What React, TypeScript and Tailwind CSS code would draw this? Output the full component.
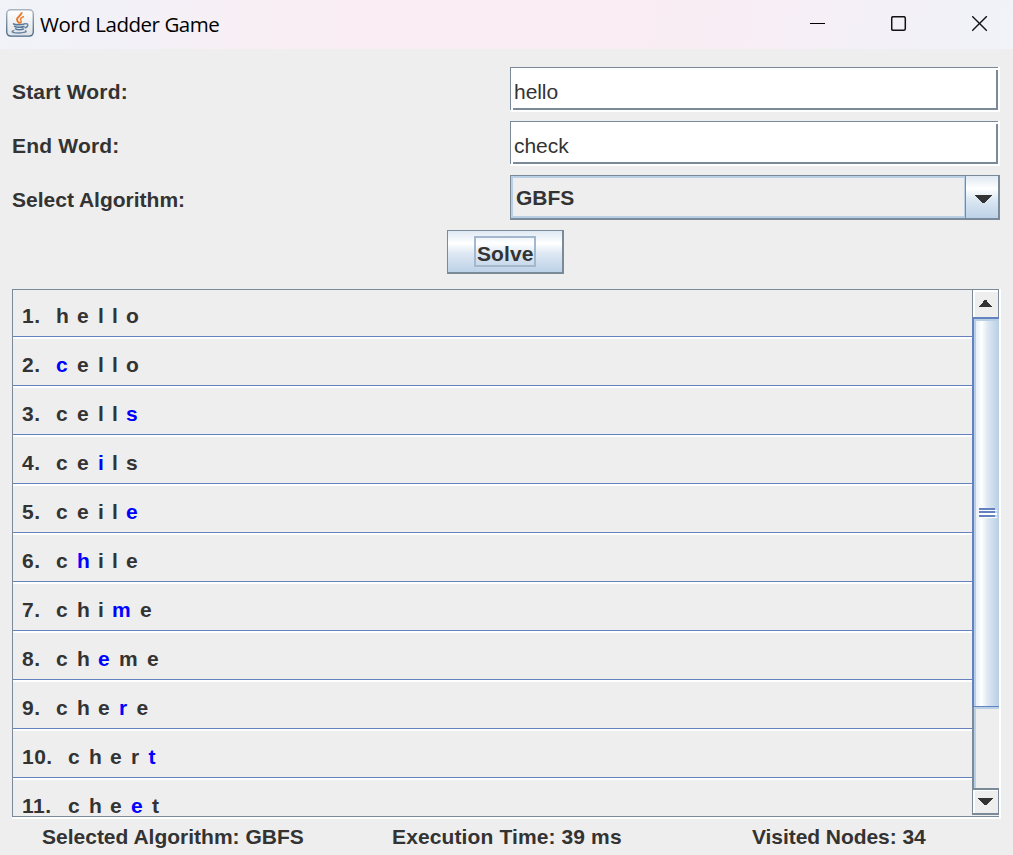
import React from "react";

const glyphWidth: Record<string, string> = {
  i: "w-[5.25px]",
  l: "w-[5.25px]",
  t: "w-[7px]",
  r: "w-[8.75px]",
  m: "w-[19.25px]",
};

const ladder: { word: string; changed: number }[] = [
  { word: "hello", changed: -1 },
  { word: "cello", changed: 0 },
  { word: "cells", changed: 4 },
  { word: "ceils", changed: 2 },
  { word: "ceile", changed: 4 },
  { word: "chile", changed: 1 },
  { word: "chime", changed: 3 },
  { word: "cheme", changed: 2 },
  { word: "chere", changed: 3 },
  { word: "chert", changed: 4 },
  { word: "cheet", changed: 3 },
];

function JavaIcon() {
  return (
    <svg className="h-7 w-7 shrink-0" viewBox="0 0 28 28" fill="none">
      <defs>
        <linearGradient id="tile" x1="0" y1="0" x2="0" y2="1">
          <stop offset="0" stopColor="#ffffff" />
          <stop offset="1" stopColor="#dfe2e5" />
        </linearGradient>
        <linearGradient id="edge" x1="0" y1="0" x2="0" y2="1">
          <stop offset="0" stopColor="#a9b5be" />
          <stop offset="1" stopColor="#476783" />
        </linearGradient>
      </defs>
      <rect x="0.7" y="0.7" width="26.6" height="26.4" rx="4" fill="url(#tile)" stroke="url(#edge)" strokeWidth="1.4" />
      <path d="M15.800 3.200C16 6.400 10.600 7.600 11 10.800C11.300 12.600 12.800 13.200 13.600 14.600" stroke="#e8792c" strokeWidth="1.900" />
      <path d="M18 7.600C15 8.600 13.800 9.800 14.800 11.400C15.600 12.600 15.400 13.400 14.400 14.600" stroke="#ea8238" strokeWidth="1.600" />
      <path d="M7.600 14.900C8.600 16 16.600 16 18.600 14.900M8.600 17.400C10 18.600 16 18.500 18 17.500M9.600 19.900C11 21 15.800 20.900 17.300 20" stroke="#56789a" strokeWidth="1.600" strokeLinecap="round" />
      <path d="M19 14.900C23 13.800 22.600 18 18.600 19" stroke="#6685a3" strokeWidth="1.400" />
      <path d="M7.800 21.600C3.800 22.800 7.800 24.100 13 24C18.400 23.900 21.800 22.700 19.400 21.800" stroke="#6685a3" strokeWidth="1.400" strokeLinecap="round" />
    </svg>
  );
}

function TitleBar() {
  return (
    <header className="flex h-[49px] shrink-0 items-center bg-[linear-gradient(100deg,#f1f3f9_0%,#f3f1f8_12%,#f9eef3_30%,#faedf3_55%,#f9edf5_72%,#f4f0f7_85%,#f0f3f8_100%)] pl-1.5">
      <div className="pb-[3px]">
        <JavaIcon />
      </div>
      <h1 className="ml-1.5 flex-1 pb-px font-['Open_Sans',sans-serif] text-[20.5px] leading-7 tracking-[-0.46px] text-black">
        Word Ladder Game
      </h1>
      <div className="flex pb-px">
        <button aria-label="Minimize" className="flex h-12 w-[81px] items-center pl-[33px]">
          <svg className="h-4 w-4" viewBox="0 0 16 16"><path d="M0 7.500H15" stroke="#000" /></svg>
        </button>
        <button aria-label="Maximize" className="flex h-12 w-[81px] items-center pl-[33px]">
          <svg className="h-4 w-4" viewBox="0 0 16 16"><rect x=".7" y=".7" width="13.600" height="13.600" rx="1.500" fill="none" stroke="#111" strokeWidth="1.500" /></svg>
        </button>
        <button aria-label="Close" className="flex h-12 w-[74px] items-center pl-[33px]">
          <svg className="h-4 w-4" viewBox="0 0 16 16"><path d="M.2 .2L14.800 14.800M14.800 .2L.2 14.800" stroke="#111" strokeWidth="1.400" /></svg>
        </button>
      </div>
    </header>
  );
}

function Field({ value }: { value: string }) {
  return (
    <div className="relative h-[45px] border-r-2 border-b-2 border-white">
      <div className="flex h-[43px] items-end border-t border-r-2 border-b-2 border-l border-[#7a8a99] bg-white pb-1 pl-[3px] leading-6 tracking-[-0.05px]">
        {value}
      </div>
      <span className="absolute bottom-0 left-px h-0.5 w-0.5 bg-white" />
      <span className="absolute top-px right-0 h-0.5 w-0.5 bg-white" />
    </div>
  );
}

function Triangle({ className }: { className: string }) {
  return (
    <svg className={className} viewBox="0 0 17 8" preserveAspectRatio="none" shapeRendering="crispEdges">
      <path d="M0 0H17L9.500 8H7.500Z" fill="#333" />
    </svg>
  );
}

function ScrollBar() {
  return (
    <div className="flex w-[27px] shrink-0 flex-col">
      <div className="flex h-[27px] items-center border-r border-l border-[#7a8a99] pl-1.5 shadow-[inset_2px_2px_0_#fff]">
        <Triangle className="h-[7px] w-[13px] rotate-180" />
      </div>
      <div className="flex h-[390px] items-center border-t-2 border-b border-l-2 border-[#6382bf] bg-[linear-gradient(90deg,#dfe9f3_0%,#ffffff_30%,#dde8f3_55%,#b8cfe5_100%)] pt-px pl-[5px] shadow-[inset_2px_2px_0_#b8cfe5]">
        <svg className="h-[10px] w-[18px]" viewBox="0 0 18 10" shapeRendering="crispEdges">
          <path d="M2 2H18V3H2ZM2 5H18V7H2ZM2 9H18V10H2Z" fill="#fff" />
          <path d="M0 0H16V2H0ZM0 3H16V5H0ZM0 7H16V9H0Z" fill="#6382bf" />
        </svg>
      </div>
      <div className="h-[81px] border-l-2 border-[#7a8a99] shadow-[inset_2px_2px_0_#b8cfe5]" />
      <div className="flex h-[27px] items-center border-t-2 border-r border-b-2 border-l border-[#7a8a99] pl-[5px] shadow-[inset_2px_1px_0_#fff]">
        <Triangle className="h-[7px] w-[15px]" />
      </div>
    </div>
  );
}

export default function App() {
  return (
    <main className="flex h-[855px] w-[1013px] flex-col overflow-hidden bg-[#eeeeee] font-['Liberation_Sans',Arial,sans-serif] text-[21px] leading-6 text-[#333333]">
      <TitleBar />
      <section className="grid grid-cols-[498px_490px] gap-y-[9px] pt-[18px] pl-3">
        <label className="self-center pt-1 font-bold tracking-[0.17px]">Start Word:</label>
        <Field value="hello" />
        <label className="self-center pt-1 font-bold tracking-[0.2px]">End Word:</label>
        <Field value="check" />
        <label className="self-center pt-1 font-bold">Select Algorithm:</label>
        <div className="flex h-[45px] border-t border-r-2 border-b-2 border-l border-[#7a8a99]">
          <div className="flex flex-1 items-center border-2 border-r border-[#b8cfe5] pt-0.5 pl-[3px] font-bold">GBFS</div>
          <div className="flex w-[33px] items-center border-l border-[#7a8a99] bg-[linear-gradient(180deg,#dfe9f3_0%,#ffffff_30%,#dde8f3_55%,#bdd2e7_100%)] pt-[4px] pl-[9px]">
            <Triangle className="h-2 w-[17px]" />
          </div>
        </div>
      </section>
      <div className="ml-[447px] mt-[10px] flex h-11 w-[117px] shrink-0 items-center justify-center border-t border-r-2 border-b-2 border-l border-[#7a8a99] bg-[linear-gradient(180deg,#dfe9f3_0%,#ffffff_30%,#dde8f3_55%,#bdd2e7_100%)]">
        <button className="flex h-[31px] w-[62px] items-start border-2 border-[#a3b8cc] pt-1 pl-px font-bold leading-6 tracking-[0.1px]">Solve</button>
      </div>
      <section className="ml-3 mt-[15px] h-[530px] w-[989px] shrink-0 border-r-2 border-b-2 border-white">
        <div className="flex h-[528px] border-t border-b border-l border-[#7a8a99]">
          <div className="flex-1 overflow-hidden">
            {ladder.map(({ word, changed }, row) => (
              <div
                key={word}
                className={
                  row === 0
                    ? "flex h-[47px] border-b border-[#6382bf] pt-[14px] pl-[9px] font-bold"
                    : "flex h-[49px] border-t-2 border-b border-t-white border-b-[#6382bf] pt-[14px] pl-[9px] font-bold"
                }
              >
                <span className={row < 9 ? "w-[34px] tracking-[0.5px]" : "w-[46px] tracking-[0.5px]"}>{row + 1}.</span>
                <span className="flex gap-[8.75px]">
                  {word.split("").map((ch, i) => (
                    <span key={i} className={`${glyphWidth[ch] ?? "w-[12.25px]"} ${i === changed ? "text-[#0000ff]" : ""}`}>
                      {ch}
                    </span>
                  ))}
                </span>
              </div>
            ))}
          </div>
          <ScrollBar />
        </div>
      </section>
      <footer className="flex pt-[6px] pl-[42px] font-bold">
        <span className="w-[350px]">Selected Algorithm: GBFS</span>
        <span className="w-[360px] tracking-[0.12px]">Execution Time: 39 ms</span>
        <span className="tracking-[-0.06px]">Visited Nodes: 34</span>
      </footer>
    </main>
  );
}
